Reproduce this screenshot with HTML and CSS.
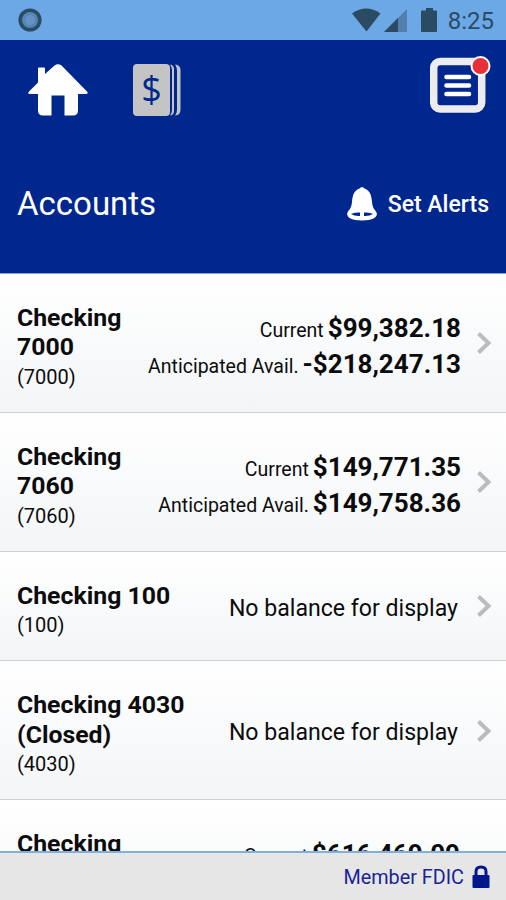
FILE: index.html
```
<!DOCTYPE html>
<html lang="en">
<head>
    <meta charset="UTF-8">
    <meta name="viewport" content="width=device-width, initial-scale=1.0">
    <title>Accounts</title>
    <link rel="stylesheet" href="styles.css">
</head>
<body>
<div class="app">
    <!-- Status bar -->
    <div class="status-bar">
        <svg class="status-dot" width="24" height="24" viewBox="0 0 24 24">
            <circle cx="12" cy="12" r="9.8" fill="#5585b4" stroke="#2b4b64" stroke-width="3.6"/>
            <circle cx="12" cy="12" r="5" fill="#6293c3"/>
        </svg>
        <div class="status-icons">
            <svg width="69" height="26" viewBox="0 0 69 26">
                <path d="M0 6.5Q14 -3.5 28.500 6.5L14.500 24.500Z" fill="#2b4b64"/>
                <path d="M55 2V25H32Z" fill="#527fae"/>
                <path d="M46 11V25H32Z" fill="#2b4b64"/>
            </svg>
            <svg width="16" height="26" viewBox="0 0 16 26">
                <path d="M5 1h7v2.500h3q1 0 1 1V24q0 1-1 1H1q-1 0-1-1V4.500q0-1 1-1h4Z" fill="#2b4b64"/>
            </svg>
            <span class="clock">8:25</span>
        </div>
    </div>

    <!-- Header -->
    <header>
        <nav class="toolbar">
            <svg class="home" width="60" height="53" viewBox="0 0 60 53">
                <path d="M10 4.500q0-1 1-1h5q1 0 1 1V10L26.500 1.500Q30 -1 33.500 1.500L59 27.500Q61 30 57.500 30H50V46.500Q50 51.500 45 51.500H36.500V31.500H23.500V51.500H15Q10 51.500 10 46.500V30H2Q-1 30 1 27.500L10 18.500Z" fill="#fff"/>
            </svg>
            <svg class="checks" width="48" height="52" viewBox="0 0 48 52">
                <rect x="0" y="0" width="37" height="52" rx="4" fill="#c4c4c4"/>
                <path d="M37 .5Q41 1 41 5V47Q41 51 37 51.500Q39 49 39 46V6Q39 3 37 .5Z" fill="#c4c4c4"/>
                <path d="M42 .5Q47.500 1 47.500 6V46Q47.500 51 42 51.500Q44 49 44 46V6Q44 3 42 .5Z" fill="#c4c4c4"/>
                <text class="dollar" x="18.500" y="38">$</text>
            </svg>
            <svg class="menu" width="62" height="60" viewBox="0 0 62 60">
                <rect x="3.700" y="6.500" width="48" height="47.500" rx="6.500" fill="none" stroke="#ececef" stroke-width="7.500"/>
                <path d="M16.500 22H39M16.500 30.500H39M16.500 39H39" stroke="#fff" stroke-width="4.600" stroke-linecap="round"/>
                <circle cx="50.500" cy="11" r="9" fill="#e8303a" stroke="#fff" stroke-width="2"/>
            </svg>
        </nav>
        <div class="title-row">
            <h1>Accounts</h1>
            <a class="alerts">
                <svg width="32" height="34" viewBox="0 0 32 34">
                    <path fill-rule="evenodd" d="M13.500 1.500Q16 -1.500 18.500 1.500C25 4 25.500 10 26 15C26.500 20 28 22 30 24.500C32.500 28 30 33.500 16 33.500S-.5 28 2 24.500C4 22 5.500 20 6 15C6.500 10 7 4 13.500 1.500ZM5 27Q9 29.500 14 29V25.500Q8 25 5 27ZM18 25.500V29Q23 29.500 27 27Q24 25 18 25.500Z" fill="#fff"/>
                </svg>
                <span>Set Alerts</span>
            </a>
        </div>
    </header>

    <!-- Account list -->
    <div class="accounts">
        <div class="account">
            <div class="name"><b>Checking 7000</b><small>(7000)</small></div>
            <div class="balances">
                <p>Current <b>$99,382.18</b></p>
                <p>Anticipated Avail. <b>-$218,247.13</b></p>
            </div>
            <svg class="arrow" width="16" height="24" viewBox="0 0 16 24"><path d="M2.500 2.500L12.500 12L2.500 21.500"/></svg>
        </div>
        <div class="account">
            <div class="name"><b>Checking 7060</b><small>(7060)</small></div>
            <div class="balances">
                <p>Current <b>$149,771.35</b></p>
                <p>Anticipated Avail. <b>$149,758.36</b></p>
            </div>
            <svg class="arrow" width="16" height="24" viewBox="0 0 16 24"><path d="M2.500 2.500L12.500 12L2.500 21.500"/></svg>
        </div>
        <div class="account">
            <div class="name wide"><b>Checking 100</b><small>(100)</small></div>
            <div class="no-balance">No balance for display</div>
            <svg class="arrow" width="16" height="24" viewBox="0 0 16 24"><path d="M2.500 2.500L12.500 12L2.500 21.500"/></svg>
        </div>
        <div class="account">
            <div class="name wide"><b>Checking 4030 (Closed)</b><small>(4030)</small></div>
            <div class="no-balance">No balance for display</div>
            <svg class="arrow" width="16" height="24" viewBox="0 0 16 24"><path d="M2.500 2.500L12.500 12L2.500 21.500"/></svg>
        </div>
        <div class="account last">
            <div class="name"><b>Checking</b></div>
            <div class="balances">
                <p>Current <b>$616,469.09</b></p>
            </div>
        </div>
    </div>

    <!-- Footer -->
    <footer>
        <span>Member FDIC</span>
        <svg width="18" height="24" viewBox="0 0 18 24">
            <path d="M4 11V6.500Q4 2 9 2T14 6.500V11" fill="none" stroke="#00188c" stroke-width="3"/>
            <rect x="0.500" y="10" width="17" height="13" rx="1" fill="#00188c"/>
        </svg>
    </footer>
</div>
</body>
</html>
```
FILE: styles.css
```
* {
    box-sizing: border-box;
}

body {
    margin: 0;
    font-family: Roboto, sans-serif;
    color: #0c0c0c;
}

.app {
    height: 900px;
    display: flex;
    flex-direction: column;
    overflow: hidden;
}

.status-bar {
    flex: none;
    height: 40px;
    padding: 0 12px 0 18px;
    display: flex;
    justify-content: space-between;
    align-items: center;
    background-color: #6ca8e6;
}

.status-icons {
    display: flex;
    align-items: center;
}

.clock {
    margin-left: 11px;
    font-size: 24px;
    line-height: 28px;
    color: #2b4b64;
    padding-top: 2px;
}

header {
    flex: none;
    height: 234px;
    background-color: #00278e;
    border-bottom: 1px solid #7ba3dc;
    color: #fff;
}

.toolbar {
    display: flex;
    align-items: flex-start;
    padding: 15px 14px 0 28px;
}

.home {
    margin-top: 9px;
}

.checks {
    margin: 9px 0 0 45px;
}

.dollar {
    font-family: "Open Sans", sans-serif;
    font-size: 36px;
    fill: #00278e;
    text-anchor: middle;
}

.menu {
    margin-left: auto;
}

.title-row {
    display: flex;
    justify-content: space-between;
    align-items: center;
    margin-top: 67px;
    padding: 0 17px;
}

h1 {
    margin: 0;
    font-size: 33px;
    font-weight: 400;
    line-height: 40px;
}

.alerts {
    display: flex;
    align-items: center;
    gap: 10px;
    font-size: 23px;
    font-weight: 500;
}

.accounts {
    flex: 1;
    min-height: 0;
    overflow: hidden;
}

.account {
    display: flex;
    align-items: center;
    padding: 28.6px 14px 20.2px 17px;
    border-bottom: 1px solid #cfd0d2;
    background: linear-gradient(#fff, #f3f5f7);
}

/* row cut by the footer */
.account.last {
    height: 139px;
    align-items: flex-start;
    padding-right: 46px;
}

.name {
    width: 110px;
    flex: none;
}

.name.wide {
    width: 180px;
}

.name b {
    display: block;
    font-size: 24.8px;
    line-height: 29.6px;
    font-weight: 700;
}

.name small {
    display: block;
    font-size: 20px;
    line-height: 30px;
}

.balances {
    flex: 1;
    margin: 0 15px 3px 0;
    text-align: right;
    white-space: nowrap;
}

.balances p {
    display: flex;
    justify-content: flex-end;
    align-items: baseline;
    gap: 4px;
    height: 36px;
    margin: 0;
    font-size: 19.5px;
    line-height: 36px;
}

.balances b {
    font-size: 26px;
    font-weight: 700;
}

.last .balances {
    margin: 7px 0 0;
}

.no-balance {
    flex: 1;
    margin-right: 18px;
    padding-bottom: 4px;
    text-align: right;
    font-size: 23.1px;
    white-space: nowrap;
}

.arrow {
    flex: none;
    margin-bottom: 8px;
}

.arrow path {
    fill: none;
    stroke: #bcbcbe;
    stroke-width: 4;
}

footer {
    flex: none;
    height: 49px;
    display: flex;
    justify-content: flex-end;
    align-items: center;
    gap: 8px;
    padding-right: 16px;
    border-top: 2px solid #7fb0dc;
    background-color: #e6e6e6;
    color: #1a2494;
    font-size: 19.8px;
}

footer span {
    padding-top: 2px;
}
```
